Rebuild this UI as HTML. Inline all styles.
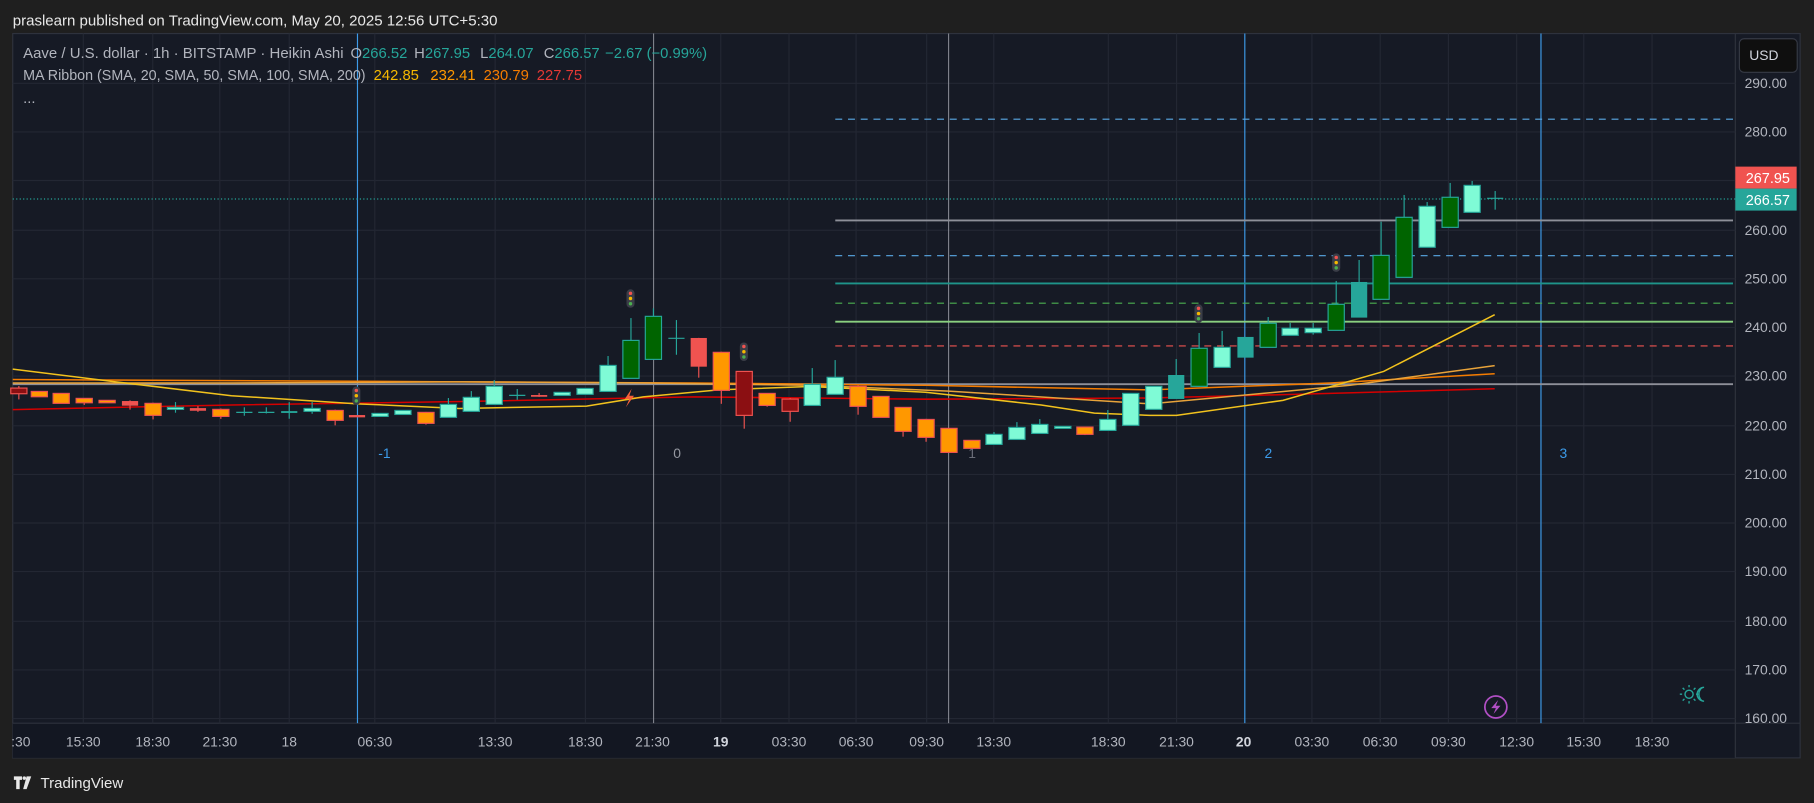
<!DOCTYPE html>
<html><head><meta charset="utf-8"><style>
html,body{margin:0;padding:0;background:#1f1f1f;width:1814px;height:803px;overflow:hidden}
svg{display:block}
text{font-family:"Liberation Sans",sans-serif}
</style></head><body>
<svg width="1814" height="803" viewBox="0 0 1568 694" preserveAspectRatio="none" xmlns="http://www.w3.org/2000/svg">
<rect width="1568" height="694" fill="#1f1f1f"/>
<text x="11" y="22" font-size="13" fill="#e8e8e8">praslearn published on TradingView.com, May 20, 2025 12:56 UTC+5:30</text>
<rect x="11" y="29" width="1545" height="626" fill="#161a25" stroke="#2e323d" stroke-width="1"/>
<rect x="11" y="625" width="1489" height="30" fill="#131722"/>
<line x1="1500" y1="29" x2="1500" y2="655" stroke="#2e323d"/>
<line x1="11" y1="625" x2="1556" y2="625" stroke="#2e323d"/>
<!-- grid -->
<g stroke="#232733" stroke-width="1">
<line x1="11" y1="72" x2="1500" y2="72"/><line x1="11" y1="114" x2="1500" y2="114"/><line x1="11" y1="156" x2="1500" y2="156"/><line x1="11" y1="199" x2="1500" y2="199"/><line x1="11" y1="241" x2="1500" y2="241"/><line x1="11" y1="283" x2="1500" y2="283"/><line x1="11" y1="325" x2="1500" y2="325"/><line x1="11" y1="368" x2="1500" y2="368"/><line x1="11" y1="410" x2="1500" y2="410"/><line x1="11" y1="452" x2="1500" y2="452"/><line x1="11" y1="494" x2="1500" y2="494"/><line x1="11" y1="537" x2="1500" y2="537"/><line x1="11" y1="579" x2="1500" y2="579"/><line x1="11" y1="621" x2="1500" y2="621"/>
<line x1="72" y1="29" x2="72" y2="625"/><line x1="132" y1="29" x2="132" y2="625"/><line x1="190" y1="29" x2="190" y2="625"/><line x1="250" y1="29" x2="250" y2="625"/><line x1="324" y1="29" x2="324" y2="625"/><line x1="428" y1="29" x2="428" y2="625"/><line x1="506" y1="29" x2="506" y2="625"/><line x1="623" y1="29" x2="623" y2="625"/><line x1="682" y1="29" x2="682" y2="625"/><line x1="740" y1="29" x2="740" y2="625"/><line x1="801" y1="29" x2="801" y2="625"/><line x1="859" y1="29" x2="859" y2="625"/><line x1="958" y1="29" x2="958" y2="625"/><line x1="1017" y1="29" x2="1017" y2="625"/><line x1="1134" y1="29" x2="1134" y2="625"/><line x1="1193" y1="29" x2="1193" y2="625"/><line x1="1252" y1="29" x2="1252" y2="625"/><line x1="1311" y1="29" x2="1311" y2="625"/><line x1="1369" y1="29" x2="1369" y2="625"/><line x1="1428" y1="29" x2="1428" y2="625"/>
</g>
<!-- vertical markers -->
<line x1="309" y1="29" x2="309" y2="625" stroke="#3d9be9" stroke-width="1"/>
<line x1="565" y1="29" x2="565" y2="625" stroke="#9598a1" stroke-width="0.8"/>
<line x1="820" y1="29" x2="820" y2="625" stroke="#9598a1" stroke-width="0.8"/>
<line x1="1076" y1="29" x2="1076" y2="625" stroke="#3d9be9" stroke-width="1"/>
<line x1="1332" y1="29" x2="1332" y2="625" stroke="#3d9be9" stroke-width="1"/>
<text x="327" y="396" font-size="12" fill="#3d9be9">-1</text>
<text x="582" y="396" font-size="12" fill="#9598a1">0</text>
<text x="837" y="396" font-size="12" fill="#6a6d78">1</text>
<text x="1093" y="396" font-size="12" fill="#3d9be9">2</text>
<text x="1348" y="396" font-size="12" fill="#3d9be9">3</text>
<!-- horizontal levels -->
<line x1="11" y1="172" x2="1500" y2="172" stroke="#26a69a" stroke-dasharray="1,2"/>
<g stroke-width="1.3">
<line x1="722" y1="103" x2="1498" y2="103" stroke="#5aa9e6" stroke-dasharray="6,5" stroke-width="1"/>
<line x1="722" y1="190.5" x2="1498" y2="190.5" stroke="#8e9099" stroke-width="1.6"/>
<line x1="722" y1="221" x2="1498" y2="221" stroke="#5aa9e6" stroke-dasharray="6,5" stroke-width="1"/>
<line x1="722" y1="245" x2="1498" y2="245" stroke="#1e948a" stroke-width="1.6"/>
<line x1="722" y1="262" x2="1498" y2="262" stroke="#4caf50" stroke-dasharray="6,5" stroke-width="1"/>
<line x1="722" y1="278" x2="1498" y2="278" stroke="#8ad07f" stroke-width="1.6"/>
<line x1="722" y1="299" x2="1498" y2="299" stroke="#ef5350" stroke-dasharray="6,5" stroke-width="1"/>
<line x1="11" y1="332" x2="1498" y2="332" stroke="#8e9099" stroke-width="1.6"/>
</g>
<!-- MA lines -->
<g fill="none" stroke-width="1.3">
<polyline stroke="#d50000" points="11,354 200,350 400,347 600,343 800,345 994,344 1150,340 1292,336"/>
<polyline stroke="#f57c00" points="11,328 200,329 400,330 600,331 800,333 994,337 1150,331 1292,323"/>
<polyline stroke="#e8a33a" points="11,331 200,331 400,330 560,331 700,333 820,338 946,346 994,349 1167,333 1292,316"/>
<polyline stroke="#f2c21d" points="11,319 100,330 200,342 309,349 397,353 507,351 556,343 621,337 700,334 800,339 900,350 946,357 994,359 1017,359 1109,346 1196,321 1292,272"/>
</g>
<!-- candles -->
<g stroke-width="1">
<g stroke="#ef5350">
<line x1="16.3" y1="333.6" x2="16.3" y2="345.2"/><line x1="72.8" y1="344" x2="72.8" y2="350"/><line x1="112.4" y1="346" x2="112.4" y2="354"/><line x1="132.3" y1="348" x2="132.3" y2="362.5"/><line x1="171.1" y1="351" x2="171.1" y2="356"/><line x1="190.9" y1="353" x2="190.9" y2="362"/><line x1="289.7" y1="354" x2="289.7" y2="367.6"/><line x1="368.2" y1="356" x2="368.2" y2="367"/><line x1="466" y1="339.7" x2="466" y2="343"/><line x1="604" y1="292" x2="604" y2="326.4"/><line x1="623.5" y1="304" x2="623.5" y2="349"/><line x1="643.3" y1="321" x2="643.3" y2="370.5"/><line x1="663.1" y1="340" x2="663.1" y2="351.5"/><line x1="683" y1="344" x2="683" y2="364.5"/><line x1="741.7" y1="333" x2="741.7" y2="358.4"/><line x1="780.6" y1="352" x2="780.6" y2="377.4"/><line x1="800.5" y1="362" x2="800.5" y2="381.8"/><line x1="937.8" y1="369" x2="937.8" y2="376"/>
</g>
<g stroke="#26a69a">
<line x1="151.7" y1="347.5" x2="151.7" y2="356.7"/><line x1="211.2" y1="352" x2="211.2" y2="359.3"/><line x1="230.2" y1="352" x2="230.2" y2="357.3"/><line x1="250" y1="347.5" x2="250" y2="361.9"/><line x1="269.8" y1="347.5" x2="269.8" y2="357.6"/><line x1="387.6" y1="344" x2="387.6" y2="360"/><line x1="407.4" y1="338" x2="407.4" y2="355"/><line x1="427.2" y1="328.5" x2="427.2" y2="349"/><line x1="447.1" y1="336.2" x2="447.1" y2="345.5"/><line x1="525.6" y1="307.7" x2="525.6" y2="338"/><line x1="545.4" y1="274.9" x2="545.4" y2="327"/><line x1="564.8" y1="266.5" x2="564.8" y2="310"/><line x1="584.7" y1="276.6" x2="584.7" y2="306.6"/><line x1="702.1" y1="318.1" x2="702.1" y2="350"/><line x1="721.9" y1="311.2" x2="721.9" y2="340"/><line x1="859.2" y1="373.4" x2="859.2" y2="384"/><line x1="879" y1="364.8" x2="879" y2="379"/><line x1="898.8" y1="362.2" x2="898.8" y2="374"/><line x1="957.6" y1="354.4" x2="957.6" y2="372"/><line x1="1016.7" y1="310.3" x2="1016.7" y2="344"/><line x1="1036.5" y1="287.8" x2="1036.5" y2="333"/><line x1="1056.4" y1="286" x2="1056.4" y2="317"/><line x1="1096.2" y1="274" x2="1096.2" y2="300"/><line x1="1115.2" y1="279.1" x2="1115.2" y2="289"/><line x1="1135.1" y1="279.1" x2="1135.1" y2="289.2"/><line x1="1155" y1="242.8" x2="1155" y2="285"/><line x1="1174.8" y1="224.7" x2="1174.8" y2="274"/><line x1="1193.8" y1="191.6" x2="1193.8" y2="258"/><line x1="1213.7" y1="168.5" x2="1213.7" y2="239"/><line x1="1233.6" y1="174.6" x2="1233.6" y2="213"/><line x1="1253.5" y1="158.1" x2="1253.5" y2="196"/><line x1="1272.5" y1="156.4" x2="1272.5" y2="183"/><line x1="1292.4" y1="165.1" x2="1292.4" y2="181.2"/>
<line x1="204.2" y1="356.4" x2="218.2" y2="356.4"/><line x1="223.2" y1="356.4" x2="237.2" y2="356.4"/><line x1="440.1" y1="341.7" x2="454.1" y2="341.7"/><line x1="577.7" y1="292.4" x2="591.7" y2="292.4"/><line x1="1285.4" y1="171.4" x2="1299.4" y2="171.4"/>
</g>
<g fill="#7ffbd6" stroke="#26a69a">
<rect x="144.7" y="352.1" width="14" height="1.7"/><rect x="262.8" y="353" width="14" height="2.5"/><rect x="321.5" y="357.3" width="14" height="2.6"/><rect x="341.3" y="354.7" width="14" height="3.5"/><rect x="380.6" y="349.5" width="14" height="11.2"/><rect x="400.4" y="343.4" width="14" height="12.1"/><rect x="420.2" y="333.9" width="14" height="15.6"/><rect x="478.9" y="339.1" width="14" height="2.6"/><rect x="498.7" y="335.7" width="14" height="5.1"/><rect x="518.6" y="315.8" width="14" height="22.5"/><rect x="695.1" y="332.2" width="14" height="18.2"/><rect x="714.9" y="326.1" width="14" height="14.7"/><rect x="852.2" y="375.4" width="14" height="8.7"/><rect x="872" y="369.4" width="14" height="10.4"/><rect x="891.8" y="366.8" width="14" height="7.8"/><rect x="911.7" y="368.5" width="14" height="1.7"/><rect x="950.6" y="362.5" width="14" height="9.5"/><rect x="970.4" y="340" width="14" height="27.6"/><rect x="990.3" y="333.9" width="14" height="19.9"/><rect x="1049.4" y="300.2" width="14" height="17.3"/><rect x="1108.2" y="283.7" width="14" height="6.1"/><rect x="1128.1" y="283.7" width="14" height="3.8"/><rect x="1226.6" y="178.3" width="14" height="35.4"/><rect x="1265.5" y="160.2" width="14" height="23.3"/>
</g>
<g fill="#006400" stroke="#26a69a">
<rect x="538.4" y="294.2" width="14" height="32.8"/><rect x="557.8" y="273.4" width="14" height="37.2"/><rect x="1029.5" y="301" width="14" height="32.9"/><rect x="1089.2" y="279.4" width="14" height="20.8"/><rect x="1148" y="263" width="14" height="22.5"/><rect x="1186.8" y="220.7" width="14" height="38"/><rect x="1206.7" y="187.8" width="14" height="51.9"/><rect x="1246.5" y="170.5" width="14" height="26"/>
</g>
<g fill="#26a69a">
<rect x="243" y="355.3" width="14" height="1.6"/><rect x="1009.7" y="324.1" width="14" height="20.7"/><rect x="1069.6" y="291.2" width="14" height="17.9"/><rect x="1167.8" y="243.7" width="14" height="30.8"/>
</g>
<g fill="#ef5350">
<rect x="105.4" y="346.6" width="14" height="4"/><rect x="164.1" y="352.7" width="14" height="2.3"/><rect x="301.6" y="358.7" width="14" height="2"/><rect x="459" y="341.4" width="14" height="1.5"/><rect x="597" y="292.1" width="14" height="24.8"/>
</g>
<g fill="#ff9800" stroke="#ef5350">
<rect x="27" y="338.3" width="14" height="4.6"/><rect x="45.9" y="340" width="14" height="8.6"/><rect x="65.8" y="344.3" width="14" height="3.8"/><rect x="85.6" y="346" width="14" height="2.1"/><rect x="125.3" y="348.6" width="14" height="10.4"/><rect x="183.9" y="353.8" width="14" height="6.1"/><rect x="282.7" y="354.7" width="14" height="8.6"/><rect x="361.2" y="356.4" width="14" height="9.5"/><rect x="616.5" y="304.5" width="14" height="32.9"/><rect x="656.1" y="340" width="14" height="10.4"/><rect x="734.7" y="333.9" width="14" height="17.3"/><rect x="754.5" y="342.6" width="14" height="18.1"/><rect x="773.6" y="352.1" width="14" height="20.7"/><rect x="793.5" y="362.5" width="14" height="15.5"/><rect x="813.3" y="370.2" width="14" height="20.8"/><rect x="833.1" y="380.6" width="14" height="6.9"/><rect x="930.8" y="369.1" width="14" height="6.3"/>
</g>
<g fill="#8b0f12" stroke="#ef5350">
<rect x="9.3" y="335.4" width="14" height="4.9"/><rect x="636.3" y="321" width="14" height="38"/><rect x="676" y="344.9" width="14" height="10.6"/>
</g>
</g>
<!-- traffic light icons -->
<g>
<g transform="translate(545,258)"><rect x="-3.5" y="-8" width="7" height="16" rx="3.5" fill="#3a3d47"/><circle cy="-4.5" r="1.5" fill="#ef5350"/><circle cy="0" r="1.5" fill="#f5b800"/><circle cy="4.5" r="1.5" fill="#4caf50"/></g>
<g transform="translate(308,342)"><rect x="-3.5" y="-8" width="7" height="16" rx="3.5" fill="#3a3d47"/><circle cy="-4.5" r="1.5" fill="#ef5350"/><circle cy="0" r="1.5" fill="#f5b800"/><circle cy="4.5" r="1.5" fill="#4caf50"/></g>
<g transform="translate(643,304)"><rect x="-3.5" y="-8" width="7" height="16" rx="3.5" fill="#3a3d47"/><circle cy="-4.5" r="1.5" fill="#ef5350"/><circle cy="0" r="1.5" fill="#f5b800"/><circle cy="4.5" r="1.5" fill="#4caf50"/></g>
<g transform="translate(1036,271)"><rect x="-3.5" y="-8" width="7" height="16" rx="3.5" fill="#3a3d47"/><circle cy="-4.5" r="1.5" fill="#ef5350"/><circle cy="0" r="1.5" fill="#f5b800"/><circle cy="4.5" r="1.5" fill="#4caf50"/></g>
<g transform="translate(1155,227)"><rect x="-3.5" y="-8" width="7" height="16" rx="3.5" fill="#3a3d47"/><circle cy="-4.5" r="1.5" fill="#ef5350"/><circle cy="0" r="1.5" fill="#f5b800"/><circle cy="4.5" r="1.5" fill="#4caf50"/></g>
</g>
<path d="M546,336 L540,345 L544,345 L541,352 L548,342 L544,342 Z" fill="#f7603a"/>
<!-- bottom icons -->
<circle cx="1293" cy="611" r="9.5" fill="none" stroke="#b14fc5" stroke-width="1.5"/>
<path d="M1295,605 L1289,612 L1293,612 L1291,617 L1297,610 L1293,610 Z" fill="#b14fc5"/>
<g stroke="#26a69a" fill="none" stroke-width="1.2"><circle cx="1460" cy="600" r="3.5"/><path d="M1454,600h-2M1466,600h2M1460,594v-2M1460,606v2M1456,596l-1.5-1.5M1464,604l1.5,1.5M1456,604l-1.5,1.5M1464,596l1.5-1.5"/><path d="M1473,594 a6,6 0 1 0 0,12 a4.5,6 0 1 1 0,-12z"/></g>
<!-- legend -->
<g font-size="12.8" fill="#b2b5be">
<text x="20" y="50" textLength="277" lengthAdjust="spacingAndGlyphs">Aave / U.S. dollar · 1h · BITSTAMP · Heikin Ashi</text>
<text x="303" y="50">O<tspan fill="#26a69a">266.52</tspan></text>
<text x="358" y="50">H<tspan fill="#26a69a">267.95</tspan></text>
<text x="415" y="50">L<tspan fill="#26a69a">264.07</tspan></text>
<text x="470" y="50">C<tspan fill="#26a69a">266.57</tspan></text>
<text x="523" y="50" fill="#26a69a">−2.67 (−0.99%)</text>
<text x="20" y="69" textLength="296" lengthAdjust="spacingAndGlyphs">MA Ribbon (SMA, 20, SMA, 50, SMA, 100, SMA, 200)</text>
<text x="323" y="69" fill="#f5b800">242.85</text>
<text x="372" y="69" fill="#ff9800">232.41</text>
<text x="418" y="69" fill="#f57c00">230.79</text>
<text x="464" y="69" fill="#e53935">227.75</text>
<text x="20" y="89">...</text>
</g>
<!-- price axis -->
<rect x="1503.5" y="33.5" width="50" height="29" rx="4" fill="#0f0f0f" stroke="#363a45"/>
<text x="1512" y="52" font-size="12" fill="#d1d4dc">USD</text>
<g font-size="12" fill="#b2b5be">
<text x="1508" y="76">290.00</text><text x="1508" y="118">280.00</text><text x="1508" y="203">260.00</text><text x="1508" y="245">250.00</text><text x="1508" y="287">240.00</text><text x="1508" y="329">230.00</text><text x="1508" y="372">220.00</text><text x="1508" y="414">210.00</text><text x="1508" y="456">200.00</text><text x="1508" y="498">190.00</text><text x="1508" y="541">180.00</text><text x="1508" y="583">170.00</text><text x="1508" y="625">160.00</text>
</g>
<rect x="1500" y="144" width="53" height="19" fill="#f05350"/>
<text x="1509" y="158" font-size="12.5" fill="#ffffff">267.95</text>
<rect x="1500" y="163" width="53" height="19" fill="#26a69a"/>
<text x="1509" y="177" font-size="12.5" fill="#ffffff">266.57</text>
<!-- time axis -->
<g font-size="12" fill="#b2b5be" text-anchor="middle">
<text x="18" y="645">:30</text><text x="72" y="645">15:30</text><text x="132" y="645">18:30</text><text x="190" y="645">21:30</text><text x="250" y="645">18</text><text x="324" y="645">06:30</text><text x="428" y="645">13:30</text><text x="506" y="645">18:30</text><text x="564" y="645">21:30</text><text x="623" y="645" font-weight="bold" fill="#d1d4dc">19</text><text x="682" y="645">03:30</text><text x="740" y="645">06:30</text><text x="801" y="645">09:30</text><text x="859" y="645">13:30</text><text x="958" y="645">18:30</text><text x="1017" y="645">21:30</text><text x="1075" y="645" font-weight="bold" fill="#d1d4dc">20</text><text x="1134" y="645">03:30</text><text x="1193" y="645">06:30</text><text x="1252" y="645">09:30</text><text x="1311" y="645">12:30</text><text x="1369" y="645">15:30</text><text x="1428" y="645">18:30</text>
</g>
<!-- logo -->
<g fill="#e8e8e8"><path d="M12,671h7v3h-2v8h-3v-8h-2z"/><circle cx="21" cy="672.5" r="1.5"/><path d="M23,671h4l-4,11h-3z"/></g>
<text x="35" y="681" font-size="13" fill="#e8e8e8">TradingView</text>
</svg>
</body></html>
